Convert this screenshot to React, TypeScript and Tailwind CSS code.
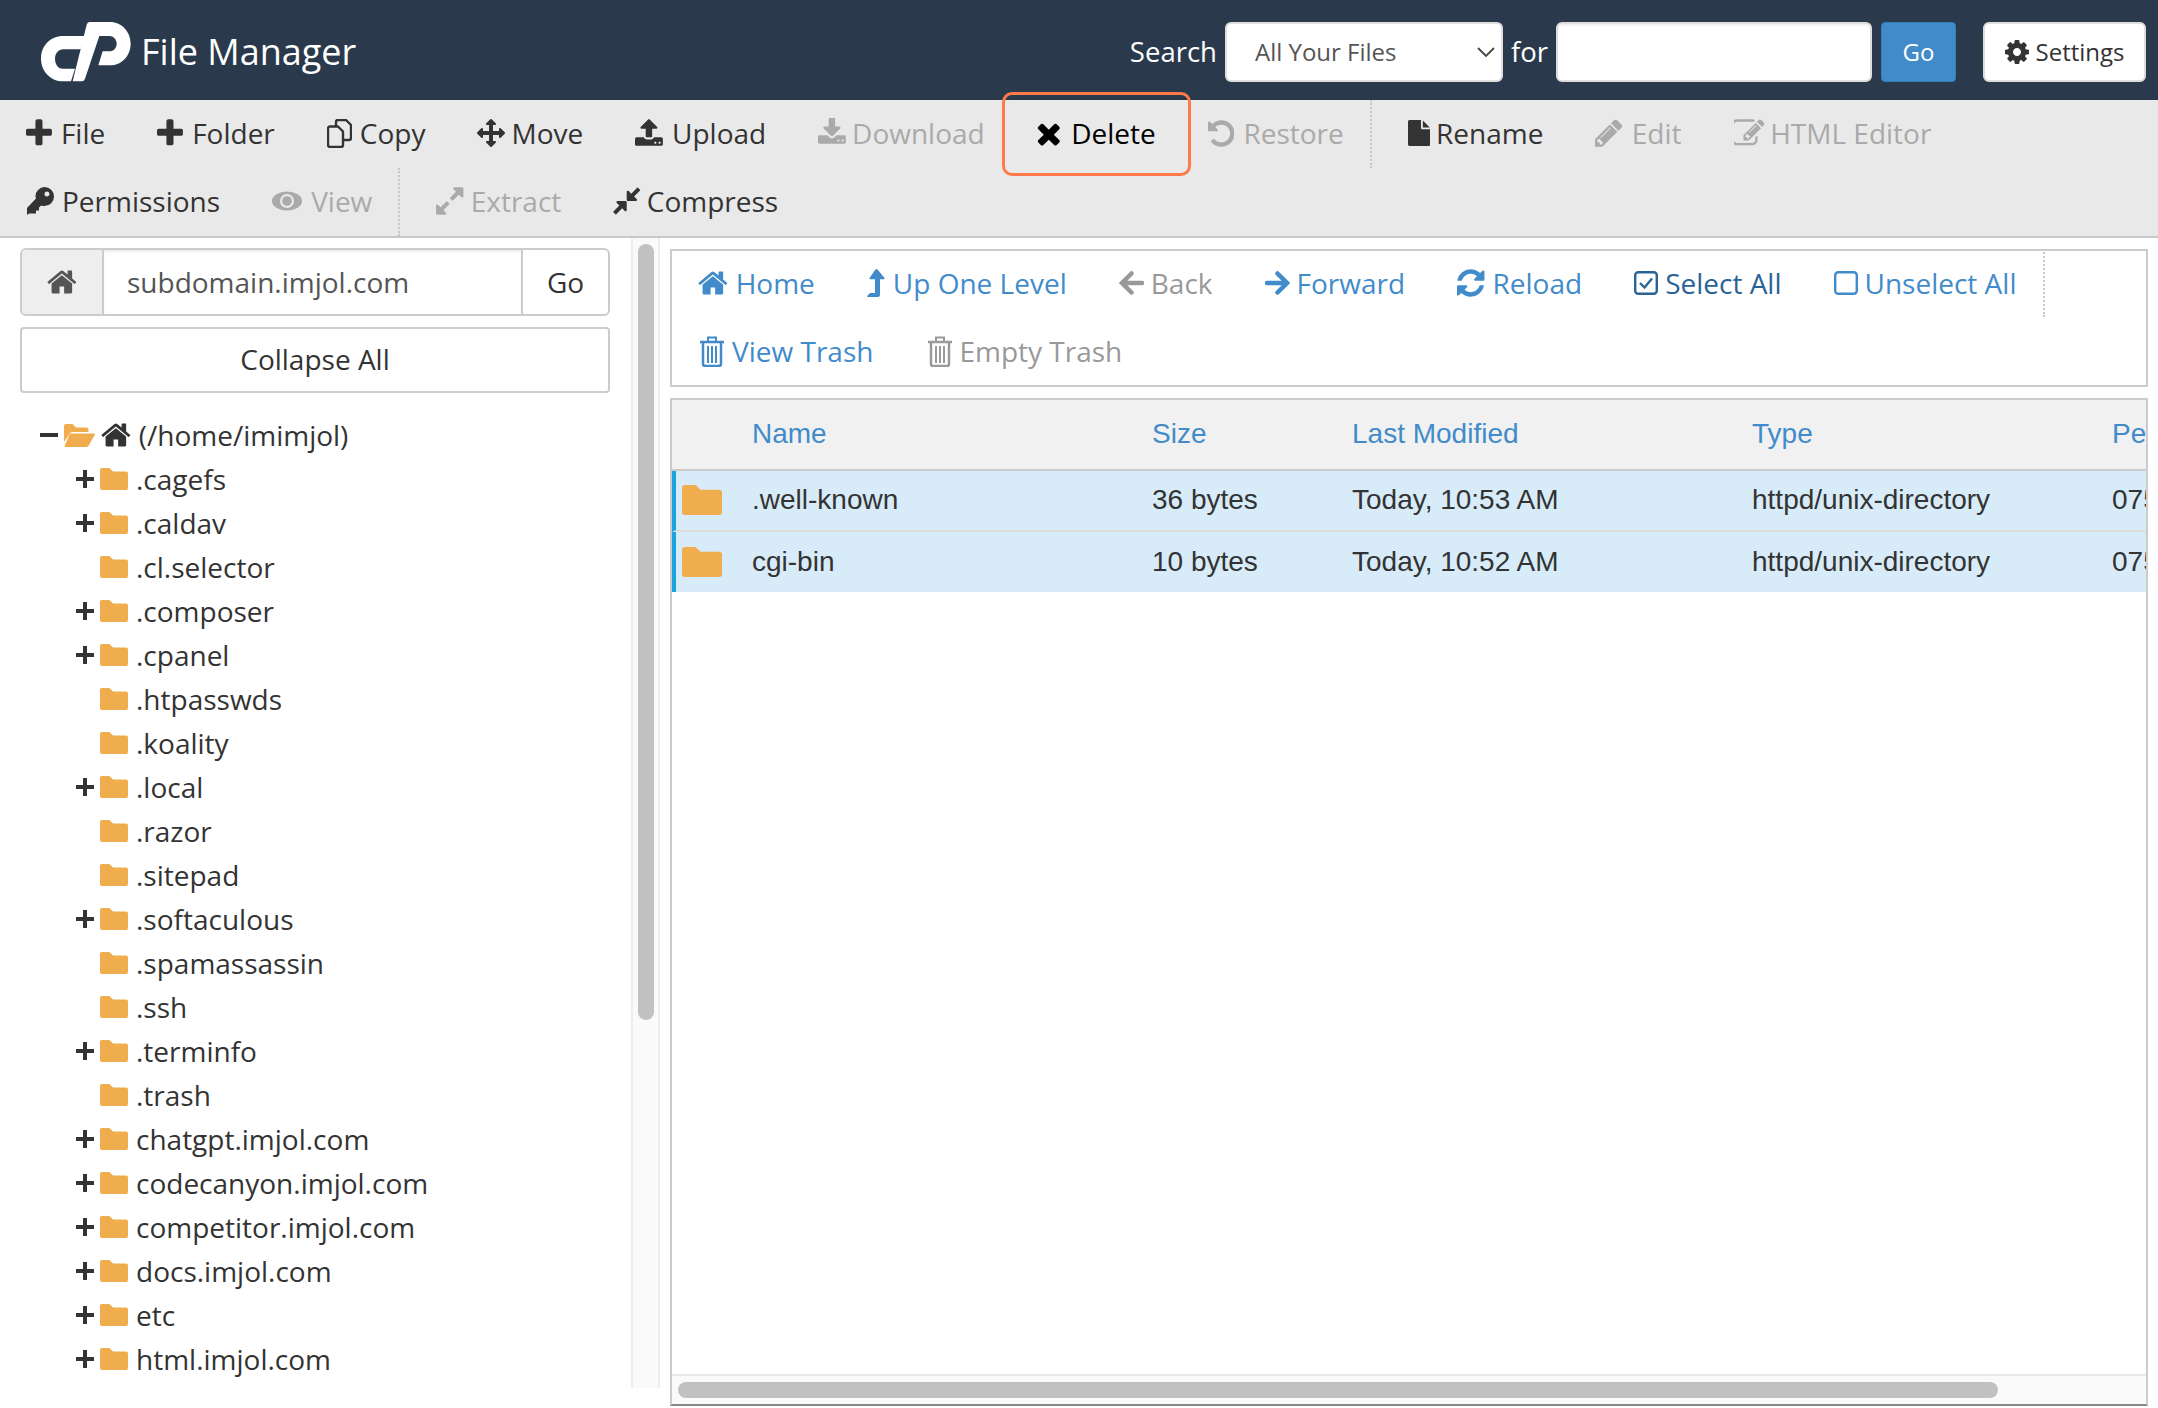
import type { ReactNode } from "react";

const paths = {
  plus: "M1600 736v192q0 40-28 68t-68 28h-416v416q0 40-28 68t-68 28h-192q-40 0-68-28t-28-68v-416h-416q-40 0-68-28t-28-68v-192q0-40 28-68t68-28h416v-416q0-40 28-68t68-28h192q40 0 68 28t28 68v416h416q40 0 68 28t28 68z",
  move: "M1792 896q0 26-19 45l-256 256q-19 19-45 19t-45-19-19-45v-128h-384v384h128q26 0 45 19t19 45-19 45l-256 256q-19 19-45 19t-45-19l-256-256q-19-19-19-45t19-45 45-19h128v-384h-384v128q0 26-19 45t-45 19-45-19l-256-256q-19-19-19-45t19-45l256-256q19-19 45-19t45 19 19 45v128h384v-384h-128q-26 0-45-19t-19-45 19-45l256-256q19-19 45-19t45 19l256 256q19 19 19 45t-19 45-45 19h-128v384h384v-128q0-26 19-45t45-19 45 19l256 256q19 19 19 45z",
  upload: "M1344 1472q0-26-19-45t-45-19-45 19-19 45 19 45 45 19 45-19 19-45zm256 0q0-26-19-45t-45-19-45 19-19 45 19 45 45 19 45-19 19-45zm128-224v320q0 40-28 68t-68 28h-1472q-40 0-68-28t-28-68v-320q0-40 28-68t68-28h427q21 56 70.5 92t110.5 36h256q61 0 110.5-36t70.5-92h427q40 0 68 28t28 68zm-325-648q-17 40-59 40h-256v448q0 26-19 45t-45 19h-256q-26 0-45-19t-19-45v-448h-256q-42 0-59-40-17-39 14-69l448-448q18-19 45-19t45 19l448 448q31 30 14 69z",
  download: "M1344 1344q0-26-19-45t-45-19-45 19-19 45 19 45 45 19 45-19 19-45zm256 0q0-26-19-45t-45-19-45 19-19 45 19 45 45 19 45-19 19-45zm128-224v320q0 40-28 68t-68 28h-1472q-40 0-68-28t-28-68v-320q0-40 28-68t68-28h465l135 136q58 56 136 56t136-56l136-136h464q40 0 68 28t28 68zm-325-569q17 41-14 70l-448 448q-18 19-45 19t-45-19l-448-448q-31-29-14-70 17-39 59-39h256v-448q0-26 19-45t45-19h256q26 0 45 19t19 45v448h256q42 0 59 39z",
  times: "M1490 1322q0 40-28 68l-136 136q-28 28-68 28t-68-28l-294-294-294 294q-28 28-68 28t-68-28l-136-136q-28-28-28-68t28-68l294-294-294-294q-28-28-28-68t28-68l136-136q28-28 68-28t68 28l294 294 294-294q28-28 68-28t68 28l136 136q28 28 28 68t-28 68l-294 294 294 294q28 28 28 68z",
  undo: "M1664 896q0 156-61 298t-164 245-245 164-298 61q-172 0-327-72.5t-264-204.5q-7-10-6.5-22.5t8.5-20.5l137-138q10-9 25-9 16 2 23 12 73 95 179 147t225 52q104 0 198.5-40.5t163.5-109.5 109.5-163.5 40.5-198.5-40.5-198.5-109.5-163.5-163.5-109.5-198.5-40.5q-98 0-188 35.5t-160 101.5l137 138q31 30 14 69-17 40-59 40h-448q-26 0-45-19t-19-45v-448q0-42 40-59 39-17 69 14l130 129q107-101 244.5-156.5t284.5-55.5q156 0 298 61t245 164 164 245 61 298z",
  file: "M1152 512v-472q22 14 36 28l408 408q14 14 28 36h-472zm-128 32q0 40 28 68t68 28h544v1056q0 40-28 68t-68 28h-1344q-40 0-68-28t-28-68v-1600q0-40 28-68t68-28h800v544z",
  pencil: "M491 1536l91-91-235-235-91 91v107h128v128h107zm523-928q0-22-22-22-10 0-17 7l-542 542q-7 7-7 17 0 22 22 22 10 0 17-7l542-542q7-7 7-17zm-54-192l416 416-832 832h-416v-416zm683 96q0 53-37 90l-166 166-416-416 166-165q36-38 90-38 53 0 91 38l235 234q37 39 37 91z",
  edit: "M888 1184l116-116-152-152-116 116v56h96v96h56zm440-720q-16-16-33 1l-350 350q-17 17-1 33t33-1l350-350q17-17 1-33zm80 594v190q0 119-84.5 203.5t-203.5 84.5h-832q-119 0-203.5-84.5t-84.5-203.5v-832q0-119 84.5-203.5t203.5-84.5h832q63 0 117 25 15 7 18 23 3 17-9 29l-49 49q-14 14-32 8-23-6-45-6h-832q-66 0-113 47t-47 113v832q0 66 47 113t113 47h832q66 0 113-47t47-113v-126q0-13 9-22l64-64q15-15 35-7t20 29zm-96-738l288 288-672 672h-288v-288zm444 132l-92 92-288-288 92-92q27-27 68-27t68 27l152 152q27 27 27 68t-27 68z",
  expand: "M883 1056q0 13-10 23l-332 332 144 144q19 19 19 45t-19 45-45 19h-448q-26 0-45-19t-19-45v-448q0-26 19-45t45-19 45 19l144 144 332-332q10-10 23-10t23 10l114 114q10 10 10 23zm781-864v448q0 26-19 45t-45 19-45-19l-144-144-332 332q-10 10-23 10t-23-10l-114-114q-10-10-10-23t10-23l332-332-144-144q-19-19-19-45t19-45 45-19h448q26 0 45 19t19 45z",
  compress: "M896 960v448q0 26-19 45t-45 19-45-19l-144-144-332 332q-10 10-23 10t-23-10l-114-114q-10-10-10-23t10-23l332-332-144-144q-19-19-19-45t19-45 45-19h448q26 0 45 19t19 45zm755-672q0 13-10 23l-332 332 144 144q19 19 19 45t-19 45-45 19h-448q-26 0-45-19t-19-45v-448q0-26 19-45t45-19 45 19l144 144 332-332q10-10 23-10t23 10l114 114q10 10 10 23z",
  home: "M1472 992v480q0 26-19 45t-45 19h-384v-384h-256v384h-384q-26 0-45-19t-19-45v-480q0-1 .5-3t.5-3l575-474 575 474q1 2 1 6zm223-69l-62 74q-8 9-21 11h-3q-13 0-21-7l-692-577-692 577q-12 8-24 7-13-2-21-11l-62-74q-8-10-7-23.5t11-22.5l719-599q32-26 76-26t76 26l244 204v-195q0-14 9-23t23-9h192q14 0 23 9t9 23v408l219 182q10 8 11 21.5t-7 23.5z",
  refresh: "M1639 1056q0 5-1 7-64 268-268 434.5t-478 166.5q-146 0-282.5-55t-243.5-157l-129 129q-19 19-45 19t-45-19-19-45v-448q0-26 19-45t45-19h448q26 0 45 19t19 45-19 45l-137 137q71 66 161 102t187 36q134 0 250-65t186-179q11-17 53-117 8-23 30-23h192q13 0 22.5 9.5t9.5 22.5zm25-800v448q0 26-19 45t-45 19h-448q-26 0-45-19t-19-45 19-45l138-138q-148-137-349-137-134 0-250 65t-186 179q-11 17-53 117-8 23-30 23h-199q-13 0-22.5-9.5t-9.5-22.5v-7q65-268 270-434.5t480-166.5q146 0 284 55.5t245 156.5l130-129q19-19 45-19t45 19 19 45z",
  cog: "M1152 896q0-106-75-181t-181-75-181 75-75 181 75 181 181 75 181-75 75-181zm512-109v222q0 12-8 23t-20 13l-185 28q-19 54-39 91 35 50 107 138 10 12 10 25t-9 23q-27 37-99 108t-94 71q-12 0-26-9l-138-108q-44 23-91 38-16 136-29 186-7 28-36 28h-222q-14 0-24.5-8.5t-11.5-21.5l-28-184q-49-16-90-37l-141 107q-10 9-25 9-14 0-25-11-126-114-165-168-7-10-7-23 0-12 8-23 15-21 51-66.5t54-70.5q-27-50-41-99l-183-27q-13-2-21-12.5t-8-23.5v-222q0-12 8-23t19-13l186-28q14-46 39-92-40-57-107-138-10-12-10-24 0-10 9-23 26-36 98.5-107.5t94.5-71.5q13 0 26 10l138 107q44-23 91-38 16-136 29-186 7-28 36-28h222q14 0 24.5 8.5t11.5 21.5l28 184q49 16 90 37l142-107q9-9 24-9 13 0 25 10 129 119 165 170 7 8 7 22 0 12-8 23-15 21-51 66.5t-54 70.5q26 50 41 98l183 28q13 2 21 12.5t8 23.5z",
};

// crop is [x, width] in the 1792 grid, so the icon takes only the room its glyph needs
function Fa({ d, crop = [0, 1792], size = 33, className }: { d: string; crop?: number[]; size?: number; className?: string }) {
  return (
    <svg viewBox={`${crop[0]} 0 ${crop[1]} 1792`} width={(crop[1] * size) / 1792} height={size} fill="currentColor" className={className}>
      <path d={d} />
    </svg>
  );
}

function Trash({ className }: { className?: string }) {
  return (
    <svg viewBox="0 0 24 31" width="24" height="31" fill="none" stroke="currentColor" strokeWidth="2" className={className}>
      <path d="M0 6h24" strokeWidth="2.5" />
      <path d="M8 5V1.5h8V5" />
      <path d="M3 7v21a2 2 0 0 0 2 2h14a2 2 0 0 0 2-2V7" strokeWidth="2.5" />
      <path d="M8 10v17M12 10v17M16 10v17" />
    </svg>
  );
}

function CheckBox() {
  return (
    <svg viewBox="0 0 24 24" width="24" height="24" fill="none" stroke="currentColor">
      <rect x="1.2" y="1.2" width="21.6" height="21.6" rx="3" strokeWidth="2.4" />
      <path d="M6 12l4.5 4.5L18 7.5" strokeWidth="2.4" />
    </svg>
  );
}

function EmptyBox() {
  return (
    <svg viewBox="0 0 24 24" width="24" height="24" fill="none" stroke="currentColor">
      <rect x="1.2" y="1.2" width="21.6" height="21.6" rx="3" strokeWidth="2.4" />
    </svg>
  );
}

function CopyIcon() {
  return (
    <svg viewBox="0 0 25 29" width="25" height="29" fill="none" stroke="currentColor" strokeWidth="2.4" strokeLinejoin="round">
      <path d="M9 7V3a2 2 0 0 1 2-2h8l5 5v13a2 2 0 0 1-2 2h-6" />
      <path d="M3 7.500h8l5 5V26a2 2 0 0 1-2 2H3a2 2 0 0 1-2-2V9.500a2 2 0 0 1 2-2z" />
    </svg>
  );
}

function KeyIcon() {
  return (
    <svg viewBox="0 0 28 28" width="28" height="28" fill="currentColor">
      <path fillRule="evenodd" d="M18.500 0a9.500 9.500 0 0 1 0 19c-1.200 0-2.300-.2-3.300-.6L13 20.500v3h-3v3H3L1 28V21l9-9.500c-.4-1-.5-1.500-.5-2.500A9.500 9.500 0 0 1 18.500 0zM21 4.500a2.500 2.500 0 1 0 0 5 2.500 2.500 0 0 0 0-5z" />
    </svg>
  );
}

function EyeIcon() {
  return (
    <svg viewBox="0 0 30 20" width="30" height="20">
      <ellipse cx="15" cy="10" rx="15" ry="9.500" fill="currentColor" />
      <circle cx="15" cy="10" r="7" fill="#e9e9e9" />
      <circle cx="15" cy="10" r="4.800" fill="currentColor" />
    </svg>
  );
}

function ArrowLeft() {
  return (
    <svg viewBox="0 0 25 24" width="25" height="24" fill="none" stroke="currentColor" strokeWidth="4.500" strokeLinecap="round">
      <path d="M23 12H3.500M12.500 2.500L3 12l9.500 9.500" />
    </svg>
  );
}

function ArrowRight() {
  return (
    <svg viewBox="0 0 25 24" width="25" height="24" fill="none" stroke="currentColor" strokeWidth="4.500" strokeLinecap="round">
      <path d="M2 12h19.500M12.500 2.500L22 12l-9.500 9.500" />
    </svg>
  );
}

function LevelUp() {
  return (
    <svg viewBox="0 0 18 28" width="18" height="28" fill="currentColor">
      <path d="M9.500 0c.5 0 .8.2 1.100.6L17.500 9c.4.600 0 1.200-.7 1.200H13V26c0 1.200-.8 2-2 2H1c-.8 0-1.100-.6-.6-1.200L3 24h5V10.200H3.200c-.7 0-1.100-.6-.7-1.200L8.400.6c.3-.4.600-.6 1.100-.6z" />
    </svg>
  );
}

function TreeMark({ open }: { open?: boolean }) {
  return (
    <svg viewBox="0 0 18 18" width="18" height="18" fill="none" stroke="currentColor" strokeWidth="4">
      <path d={open ? "M0 9h18" : "M0 9h18M9 0v18"} />
    </svg>
  );
}

function Folder({ w = 28, h = 22 }: { w?: number; h?: number }) {
  return (
    <svg viewBox="0 0 28 22" width={w} height={h} preserveAspectRatio="none" className="shrink-0">
      <path fill="#f0ad4e" d="M2 0h7.500l3.500 3.500h13a2 2 0 0 1 2 2V20a2 2 0 0 1-2 2H2a2 2 0 0 1-2-2V2a2 2 0 0 1 2-2z" />
    </svg>
  );
}

function OpenFolder() {
  return (
    <svg viewBox="0 0 31 23" width="31" height="23" className="shrink-0">
      <path fill="#f0ad4e" d="M2 0h6.500L12 3.500h10.500a2 2 0 0 1 2 2V8H9C7.500 8 6.500 8.500 5.500 10L0 18V2a2 2 0 0 1 2-2z" />
      <path fill="#f0ad4e" d="M7 9.500h23c1 0 1.300.7.700 1.500L25 21c-.7 1.200-1.500 2-3 2H1.500c-1 0-1.300-.7-.7-1.500L5 11.500C5.500 10.300 6 9.500 7 9.500z" />
    </svg>
  );
}

function Logo() {
  return (
    <svg viewBox="0 0 360 240" width="120" height="80" fill="#fff">
      <path d="M165 72H100C60 72 33 102 33 140C33 178 62 208 100 208H123L135 170H98C84 170 75 156 75 140C75 124 86 112 100 112H152Z" />
      <path d="M178 30H240C276 30 302 60 302 95C302 132 274 160 240 160H205L218 118H238C250 118 260 108 260 95C260 82 250 72 238 72H208L165 200Q162 208 155 208H128L170 38Q172 30 178 30Z" />
    </svg>
  );
}

function Tool({ icon, label, off, hot, gap = "gap-[9px]" }: { icon: ReactNode; label: string; off?: boolean; hot?: boolean; gap?: string }) {
  return (
    <div className={`relative flex h-[68px] items-center px-[26px] pb-[2px] ${gap} ${off ? "text-[#aaaaaa]" : hot ? "text-black" : "text-[#333333]"}`}>
      {hot && <div className="absolute -inset-x-[9px] -inset-y-[8px] rounded-[10px] border-[3px] border-[#ff7a4a]" />}
      {icon}
      <span>{label}</span>
    </div>
  );
}

function Action({ icon, label, off, dark, gap = "gap-[8px]" }: { icon: ReactNode; label: string; off?: boolean; dark?: boolean; gap?: string }) {
  return (
    <div className={`flex h-[68px] items-center px-[26px] ${gap} ${off ? "text-[#999999]" : dark ? "text-[#2a6496]" : "text-[#428bca]"}`}>
      {icon}
      <span>{label}</span>
    </div>
  );
}

const tree = [
  [".cagefs", true],
  [".caldav", true],
  [".cl.selector", false],
  [".composer", true],
  [".cpanel", true],
  [".htpasswds", false],
  [".koality", false],
  [".local", true],
  [".razor", false],
  [".sitepad", false],
  [".softaculous", true],
  [".spamassassin", false],
  [".ssh", false],
  [".terminfo", true],
  [".trash", false],
  ["chatgpt.imjol.com", true],
  ["codecanyon.imjol.com", true],
  ["competitor.imjol.com", true],
  ["docs.imjol.com", true],
  ["etc", true],
  ["html.imjol.com", true],
] as const;

const files = [
  { name: ".well-known", size: "36 bytes", date: "Today, 10:53 AM" },
  { name: "cgi-bin", size: "10 bytes", date: "Today, 10:52 AM" },
];

export default function App() {
  return (
    <div className="h-[1408px] w-[2158px] overflow-hidden bg-white font-['Open_Sans',sans-serif] text-[28px] text-[#333333]">
      {/* top bar */}
      <header className="flex h-[100px] items-center bg-[#2a3a4c] pl-[30px] pr-[12px] pt-[4px] text-[27.5px] text-white">
        <Logo />
        <span className="ml-[-9px] text-[36px]">File Manager</span>
        <div className="ml-auto flex items-center">
          <span>Search</span>
          <div className="ml-[8px] flex h-[60px] w-[278px] items-center justify-between rounded-[6px] border-2 border-[#dddddd] bg-white pl-[28px] pr-[6px] text-[24px] text-[#555555]">
            All Your Files
            <svg viewBox="0 0 18 10" width="18" height="10" fill="none" stroke="#444444" strokeWidth="1.800">
              <path d="M1 1l8 8 8-8" />
            </svg>
          </div>
          <span className="ml-[8px]">for</span>
          <div className="ml-[8px] h-[60px] w-[316px] rounded-[6px] border-2 border-[#dddddd] bg-white shadow-[inset_0_2px_2px_rgba(0,0,0,0.06)]" />
          <div className="ml-[9px] flex h-[60px] w-[75px] items-center justify-center rounded-[4px] border border-[#357ebd] bg-[#428bca] text-[24px]">Go</div>
          <div className="ml-[27px] flex h-[60px] w-[163px] items-center justify-center gap-[7px] rounded-[6px] border-2 border-[#dddddd] bg-white text-[24px] text-[#333333]">
            <Fa d={paths.cog} crop={[128, 1536]} size={28} />
            Settings
          </div>
        </div>
      </header>

      {/* file toolbar */}
      <div className="h-[138px] border-b-2 border-[#c6c9cc] bg-[#e9e9e9]">
        <div className="flex">
          <Tool icon={<Fa d={paths.plus} crop={[192, 1408]} />} label="File" />
          <Tool icon={<Fa d={paths.plus} crop={[192, 1408]} />} label="Folder" />
          <Tool gap="gap-[8px]" icon={<CopyIcon />} label="Copy" />
          <Tool gap="gap-[6px]" icon={<Fa d={paths.move} size={28} />} label="Move" />
          <Tool icon={<Fa d={paths.upload} crop={[64, 1664]} size={30} />} label="Upload" />
          <Tool off gap="gap-[6px]" icon={<Fa d={paths.download} crop={[64, 1664]} size={30} />} label="Download" />
          <Tool hot gap="gap-[11px]" icon={<Fa d={paths.times} crop={[256, 1280]} size={33} />} label="Delete" />
          <Tool off icon={<Fa d={paths.undo} crop={[128, 1536]} size={31} />} label="Restore" />
          <div className="mr-[10px] h-[68px] border-l-2 border-dotted border-[#c8c8c8]" />
          <Tool gap="gap-[6px]" icon={<Fa d={paths.file} crop={[128, 1536]} size={26} />} label="Rename" />
          <Tool off icon={<Fa d={paths.pencil} crop={[128, 1536]} size={32} />} label="Edit" />
          <Tool off gap="gap-[6px]" icon={<Fa d={paths.edit} crop={[128, 1664]} size={33} />} label="HTML Editor" />
        </div>
        <div className="flex">
          <Tool gap="gap-[8px]" icon={<KeyIcon />} label="Permissions" />
          <Tool off icon={<EyeIcon />} label="View" />
          <div className="mr-[10px] h-[68px] border-l-2 border-dotted border-[#c8c8c8]" />
          <Tool off gap="gap-[7px]" icon={<Fa d={paths.expand} crop={[128, 1536]} size={32} />} label="Extract" />
          <Tool gap="gap-[6px]" icon={<Fa d={paths.compress} crop={[128, 1536]} size={32} />} label="Compress" />
        </div>
      </div>

      <div className="flex">
        {/* folder tree */}
        <aside className="h-[1150px] w-[631px] shrink-0 overflow-hidden pl-[20px] pr-[21px] pt-[10px]">
          <div className="flex h-[68px] overflow-hidden rounded-[6px] border-2 border-[#cccccc]">
            <div className="flex w-[82px] shrink-0 items-center justify-center border-r-2 border-[#cccccc] bg-[#eeeeee] text-[#555555]">
              <Fa d={paths.home} crop={[64, 1664]} size={32} />
            </div>
            <div className="flex flex-1 items-center pl-[23px] text-[#555555] shadow-[inset_0_2px_2px_rgba(0,0,0,0.07)]">subdomain.imjol.com</div>
            <div className="flex w-[87px] shrink-0 items-center justify-center border-l-2 border-[#cccccc]">Go</div>
          </div>
          <div className="mt-[11px] flex h-[66px] items-center justify-center rounded-[4px] border-2 border-[#cccccc] pb-[2px]">Collapse All</div>
          <div className="mt-[20px] flex h-[44px] items-center pl-[20px]">
            <TreeMark open />
            <span className="ml-[6px]"><OpenFolder /></span>
            <Fa d={paths.home} crop={[64, 1664]} size={32} className="ml-[6px]" />
            <span className="ml-[8px]">(/home/imimjol)</span>
          </div>
          {tree.map(([name, more]) => (
            <div key={name} className="flex h-[44px] items-center pl-[56px]">
              <span className="flex w-[24px] shrink-0 text-[#333333]">{more && <TreeMark />}</span>
              <Folder />
              <span className="ml-[8px]">{name}</span>
            </div>
          ))}
        </aside>

        <div className="h-[1150px] w-[29px] shrink-0 border-x-2 border-[#eeeeee] bg-[#fafafa] pt-[6px]">
          <div className="mx-auto h-[776px] w-[16px] rounded-full bg-[#c1c1c1]" />
        </div>

        {/* right side */}
        <div className="ml-[10px] flex h-[1168px] w-[1478px] flex-col pt-[11px]">
          <div className="h-[138px] shrink-0 border-2 border-[#cccccc]">
            <div className="-mt-[2px]">
              <div className="flex">
                <Action icon={<Fa d={paths.home} crop={[64, 1664]} size={32} />} label="Home" />
                <Action icon={<LevelUp />} label="Up One Level" />
                <Action off gap="gap-[7px]" icon={<ArrowLeft />} label="Back" />
                <Action gap="gap-[7px]" icon={<ArrowRight />} label="Forward" />
                <Action icon={<Fa d={paths.refresh} crop={[128, 1536]} size={32} />} label="Reload" />
                <Action dark gap="gap-[7px]" icon={<CheckBox />} label="Select All" />
                <Action gap="gap-[7px]" icon={<EmptyBox />} label="Unselect All" />
                <div className="ml-[1px] h-[68px] border-l-2 border-dotted border-[#c8c8c8]" />
              </div>
              <div className="flex">
                <Action icon={<Trash className="ml-[2px]" />} label="View Trash" />
                <Action off gap="gap-[7px]" icon={<Trash className="ml-[3px]" />} label="Empty Trash" />
              </div>
            </div>
          </div>

          <div className="mt-[11px] flex min-h-0 flex-1 flex-col overflow-hidden border-x-2 border-t-2 border-[#cccccc] border-b-2 border-b-[#888888] font-['Liberation_Sans',sans-serif] text-[28px]">
            <div className="flex h-[71px] shrink-0 items-center border-b-2 border-[#cccccc] bg-[#f1f1f1] pb-[2px] text-[#428bca]">
              <span className="ml-[80px] w-[400px] shrink-0">Name</span>
              <span className="w-[200px] shrink-0">Size</span>
              <span className="w-[400px] shrink-0">Last Modified</span>
              <span className="w-[360px] shrink-0">Type</span>
              <span className="shrink-0">Permissions</span>
            </div>
            {files.map((f, i) => (
              <div key={f.name} className={`flex shrink-0 items-center overflow-hidden border-l-4 border-[#1ba4e0] bg-[#d7ebf9] ${i === 0 ? "h-[61px] border-b-2 border-b-[#dddddd] pb-[2px]" : "h-[60px]"}`}>
                <span className="ml-[6px] w-[70px] shrink-0"><Folder w={40} h={30} /></span>
                <span className="w-[400px] shrink-0">{f.name}</span>
                <span className="w-[200px] shrink-0">{f.size}</span>
                <span className="w-[400px] shrink-0">{f.date}</span>
                <span className="w-[360px] shrink-0">httpd/unix-directory</span>
                <span className="shrink-0">0755</span>
              </div>
            ))}
            <div className="mt-auto flex h-[30px] shrink-0 items-center border-t-2 border-[#e8e8e8] bg-[#fafafa] pl-[6px]">
              <div className="h-[16px] w-[1320px] rounded-full bg-[#c1c1c1]" />
            </div>
          </div>
        </div>
      </div>
    </div>
  );
}
